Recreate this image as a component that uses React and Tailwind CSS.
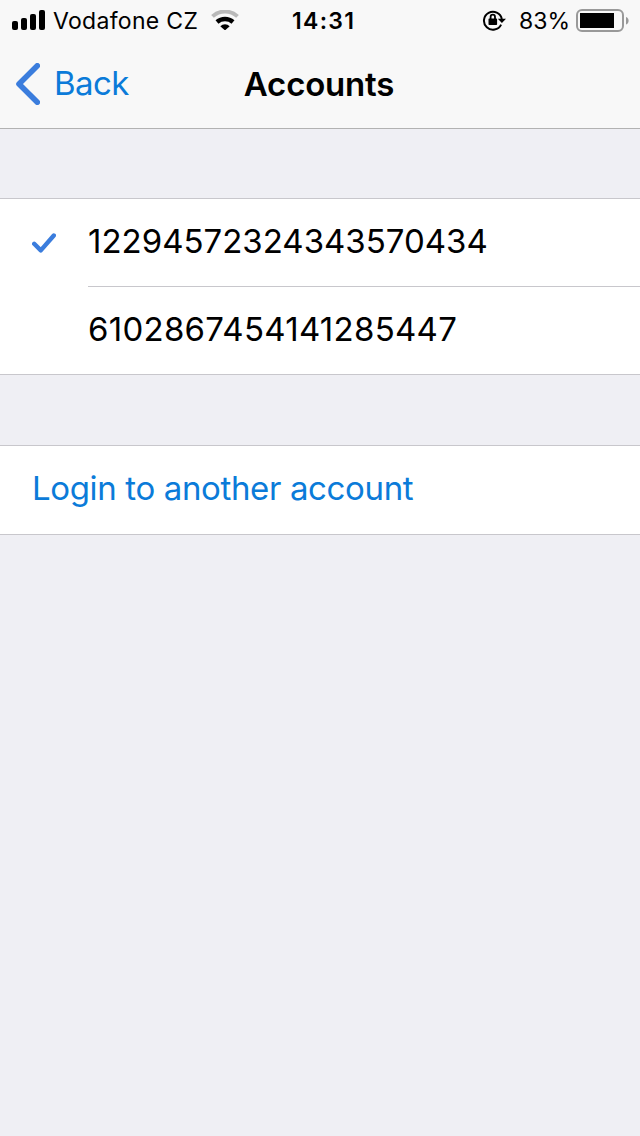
import React, { useState } from 'react';

const accounts = [
    { id: '12294572324343570434', className: 'pl-0' },
    { id: '6102867454141285447', className: 'pl-0 tracking-[0.27px]' },
];

function StatusBar() {
    return (
        <div className="flex h-10 items-center text-[23px] leading-[41px] text-black">
            <svg className="ml-3 h-5 w-[33px] shrink-0" viewBox="0 0 33 20" fill="black">
                <rect x="0" y="11" width="6" height="9" rx="2" />
                <rect x="9" y="8" width="6" height="12" rx="2" />
                <rect x="18" y="4" width="6" height="16" rx="2" />
                <rect x="27" y="0" width="6" height="20" rx="2" />
            </svg>
            <span className="ml-2 w-[158px] shrink-0 pt-0.5 whitespace-nowrap tracking-[0.3px]">Vodafone CZ</span>
            <svg className="h-5 w-7 shrink-0" viewBox="0 0 28 20" fill="none">
                <path d="M1.5 6.4A18.5 18.5 0 0 1 26.5 6.4" stroke="#b9b9b9" strokeWidth="4" />
                <path d="M6 12A12 12 0 0 1 22 12" stroke="black" strokeWidth="4.4" />
                <path d="M9.3 16.2A6.8 6.8 0 0 1 18.7 16.2L14 20.4Z" fill="black" />
            </svg>
            <span className="ml-[53px] w-[190px] shrink-0 pt-0.5 font-semibold tracking-[1.3px]">14:31</span>
            <svg className="h-[22px] w-6 shrink-0" viewBox="0 0 24 22" fill="none">
                <path d="M19.1 15.6A9 9 0 1 1 19.8 10" stroke="black" strokeWidth="2" />
                <path d="M15.8 9.8H24L19.9 14Z" fill="black" />
                <path d="M8.6 10.5V7.9a2.2 2.2 0 0 1 4.4 0V10.5" stroke="black" strokeWidth="1.8" />
                <rect x="6.5" y="9.6" width="8.6" height="6.4" rx="0.8" fill="black" />
            </svg>
            <span className="ml-[13px] w-[57px] shrink-0 pt-0.5 whitespace-nowrap">83%</span>
            <svg className="mt-px h-[23px] w-[54px] shrink-0" viewBox="0 0 54 23" fill="none">
                <rect x="1" y="1" width="46" height="21" rx="5" stroke="#999999" strokeWidth="2" />
                <rect x="4" y="4" width="34" height="15" fill="black" />
                <path d="M50 8C53.5 9 53.5 14.5 50 15.5Z" fill="#999999" />
            </svg>
        </div>
    );
}

function NavBar({ title }) {
    return (
        <div className="grid h-[88px] grid-cols-[1fr_auto_1fr] items-center">
            <button type="button" className="flex items-center pl-4 text-[33px] leading-[42px] text-[#0b7bd9]">
                <svg className="h-[42px] w-6" viewBox="0 0 24 42" fill="none">
                    <path d="M21.3 2.8L3 21L21.3 39.2" stroke="#3b7ddd" strokeWidth="5.6" strokeLinecap="round" strokeLinejoin="round" />
                </svg>
                <span className="ml-[14px] pb-0.5 tracking-[-0.6px]">Back</span>
            </button>
            <h1 className="pr-[2px] text-[33px] leading-[42px] font-semibold tracking-[-0.2px] text-black">{title}</h1>
        </div>
    );
}

export default function App() {
    const [selected, setSelected] = useState(accounts[0].id);

    return (
        <div className="min-h-screen w-full overflow-hidden bg-[#efeff4] font-['Inter',sans-serif]">
            <header className="h-[129px] border-b border-[#b2b2b2] bg-[#f8f8f8]">
                <StatusBar />
                <NavBar title="Accounts" />
            </header>

            <ul className="mt-[69px] border-y border-[#c8c7cc] bg-white">
                {accounts.map(({ id, className }) => (
                    <li key={id} onClick={() => setSelected(id)} className="group flex h-[88px] last:h-[87px]">
                        <div className="flex w-[88px] items-center pl-8">
                            {selected === id && (
                                <svg className="h-5 w-6" viewBox="0 0 24 20" fill="none">
                                    <path d="M2.2 10.8L8.8 17.4L21.8 2.5" stroke="#3b7ddd" strokeWidth="4.4" strokeLinecap="round" strokeLinejoin="round" />
                                </svg>
                            )}
                        </div>
                        <div className="flex flex-1 items-center border-b border-[#c8c7cc] pb-px text-[33px] text-black group-last:border-b-0">
                            <span className={className}>{id}</span>
                        </div>
                    </li>
                ))}
            </ul>

            <button type="button" className="mt-[70px] flex h-[90px] w-full items-center border-y border-[#c8c7cc] bg-white pb-0.5 pl-8 text-[33px] tracking-[-0.36px] text-[#0b7bd9]">
                Login to another account
            </button>
        </div>
    );
}
